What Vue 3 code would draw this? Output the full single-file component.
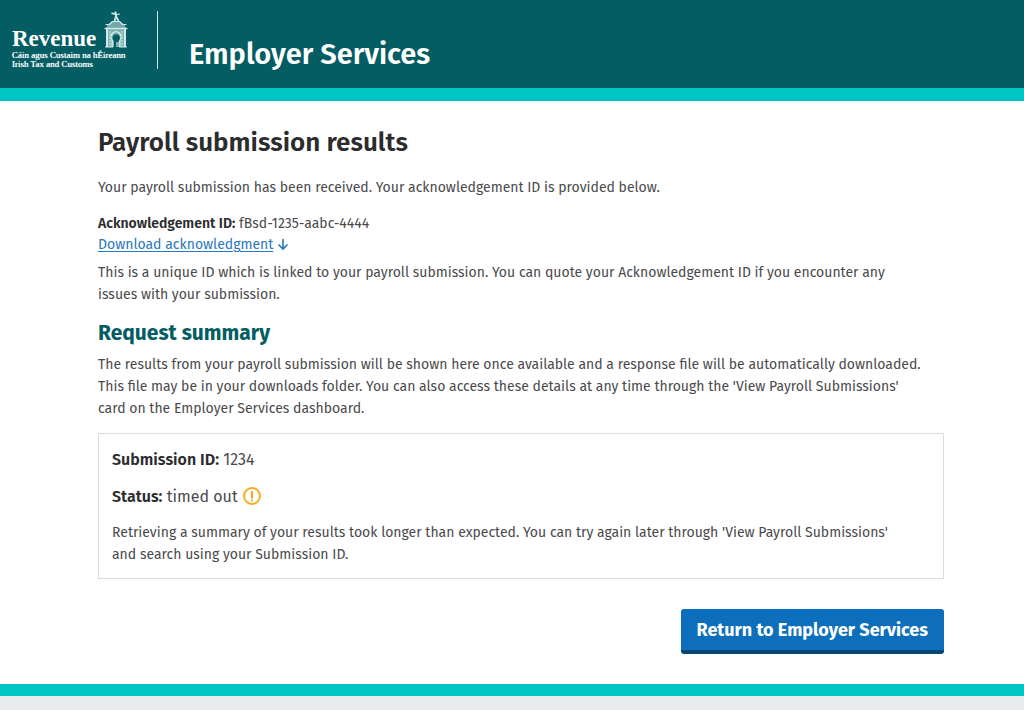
<script setup>
const acknowledgementId = 'fBsd-1235-aabc-4444'
const submissionId = '1234'
const status = 'timed out'
</script>

<template>
  <div class="page">
    <header class="header">
      <div class="brand">
        <div class="brand-top">
          <span class="brand-name">Revenue</span>
          <svg class="brand-mark" viewBox="0 0 24 37" aria-hidden="true">
            <path d="M2 16h20v20H2z" fill="#7db1b2" />
            <path d="M3 14l5-4h8l5 4v4H3z" fill="#6fa9aa" />
            <g fill="none" stroke="#d3e9e9">
              <path d="M7.500 2l4 1.500M12.500 2.500l-1 4M10.500 10l1.500-5 2.500 5" stroke-width="1.800" />
              <path d="M11.500 4l4.500-1" stroke-width="1" />
              <path d="M1.500 13.500h4l3-3h7l3 3h4" stroke-width="1.200" />
              <path d="M0.500 17.500h23" stroke-width="1.400" />
              <path d="M3 18v18M21 18v18" stroke-width="2" />
              <path d="M6 20v16M18 20v16" stroke-width="1" stroke-dasharray="2 1" />
              <path d="M1 36h8M15 36h8" stroke-width="1.200" />
              <path d="M8.200 36v-7a5 5 0 1 1 7.600 0v7" stroke-width="1.400" />
            </g>
            <path d="M10 36v-6a3.700 3.700 0 1 1 4.500 0v1H12v5z" fill="#045d62" />
            <circle cx="11.500" cy="1.800" r="1.200" fill="#d3e9e9" />
          </svg>
        </div>
        <span class="brand-line">Cáin agus Custaim na hÉireann</span>
        <span class="brand-line">Irish Tax and Customs</span>
      </div>
      <div class="service">Employer Services</div>
    </header>

    <main class="main">
      <h1>Payroll submission results</h1>
      <p class="intro">Your payroll submission has been received. Your acknowledgement ID is provided below.</p>
      <p class="ack"><strong>Acknowledgement ID:</strong> {{ acknowledgementId }}</p>
      <p class="download">
        <a href="#download">Download acknowledgment</a>
        <svg class="arrow" viewBox="0 0 12 14" aria-hidden="true">
          <path d="M6 1v10M1.500 6.500L6 11l4.500-4.500" fill="none" stroke="#2b77bd" stroke-width="1.600" />
        </svg>
      </p>
      <p class="note">This is a unique ID which is linked to your payroll submission. You can quote your Acknowledgement ID if you encounter any issues with your submission.</p>

      <h2>Request summary</h2>
      <p class="summary">The results from your payroll submission will be shown here once available and a response file will be automatically downloaded. This file may be in your downloads folder. You can also access these details at any time through the 'View Payroll Submissions' card on the Employer Services dashboard.</p>

      <section class="card">
        <p class="field"><strong>Submission ID:</strong> {{ submissionId }}</p>
        <p class="field status">
          <span><strong>Status:</strong> {{ status }}</span>
          <svg class="warn" viewBox="0 0 20 20" aria-hidden="true">
            <circle cx="10" cy="9" r="8" fill="none" stroke="#f9ab1d" stroke-width="2" />
            <path d="M10 4v7.500M10 12.500v2" stroke="#f9ab1d" stroke-width="2" />
          </svg>
        </p>
        <p>Retrieving a summary of your results took longer than expected. You can try again later through 'View Payroll Submissions' and search using your Submission ID.</p>
      </section>

      <div class="actions">
        <button type="button" class="primary">Return to Employer Services</button>
      </div>
    </main>

    <footer class="footer"></footer>
  </div>
</template>

<style>
body {
  background: #ebecee;
}
</style>

<style scoped>
.page {
  min-height: 100vh;
  display: flex;
  flex-direction: column;
  background: #fff;
  color: #4a4a4c;
  font-family: "Fira Sans", "Noto Sans", sans-serif;
  font-size: 14px;
  line-height: 22px;
}

.header {
  display: flex;
  align-items: flex-start;
  padding: 11px 12px 16px;
  background: #045d62;
  border-bottom: 13px solid #00c5c7;
  color: #fff;
}

.brand {
  display: flex;
  flex-direction: column;
  width: 145px;
  border-right: 1px solid #d3e3e3;
  font-family: "Liberation Serif", serif;
  white-space: nowrap;
}

.brand-top {
  display: flex;
  align-items: flex-end;
  gap: 8px;
  height: 40px;
}

.brand-name {
  font-size: 23px;
  font-weight: 700;
  line-height: 24px;
}

.brand-mark {
  align-self: flex-start;
  width: 24px;
  height: 37px;
}

.brand-line {
  font-size: 9px;
  line-height: 9px;
  text-shadow: 0 0 1px #fff;
}

.service {
  padding: 26px 0 0 31px;
  font-size: 29px;
  font-weight: 600;
  line-height: 35px;
}

.main {
  padding: 24px 80px 30px 98px;
}

h1,
h2,
p {
  margin: 0;
}

h1 {
  font-size: 26px;
  font-weight: 600;
  line-height: 36px;
  color: #2c2c2f;
}

strong {
  font-weight: 600;
  color: #2c2c2f;
}

.intro {
  margin-top: 16px;
}

.ack {
  margin-top: 14px;
}

.ack,
.download {
  line-height: 21px;
}

.download {
  display: flex;
  align-items: center;
  gap: 4px;
}

a {
  color: #2b77bd;
  text-underline-offset: 2px;
}

.arrow {
  width: 12px;
  height: 14px;
}

.note {
  margin-top: 7px;
}

.note,
.summary {
  padding-right: 20px;
}

h2 {
  margin: 12px 0 6px;
  font-size: 21px;
  font-weight: 700;
  line-height: 30px;
  color: #045d62;
}

.card {
  margin-top: 13px;
  padding: 14px 32px 12px 13px;
  border: 1px solid #dcdcde;
}

.field {
  margin-bottom: 13px;
  font-size: 16px;
  line-height: 24px;
}

.status {
  display: flex;
  align-items: center;
  gap: 4px;
}

.warn {
  width: 20px;
  height: 20px;
}

.actions {
  display: flex;
  justify-content: flex-end;
  margin-top: 30px;
}

.primary {
  padding: 10px 16px 9px;
  border: 0;
  border-bottom: 4px solid #064574;
  border-radius: 3px;
  background: #0d6fbb;
  color: #fff;
  font-family: inherit;
  font-size: 18px;
  font-weight: 700;
  line-height: 22px;
  cursor: pointer;
}

.footer {
  flex: 1;
  min-height: 14px;
  border-top: 12px solid #00c5c7;
  background: #ebecee;
}
</style>
